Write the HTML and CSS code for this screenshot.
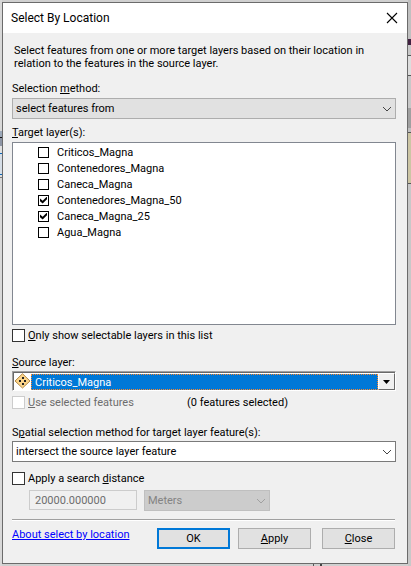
FILE: index.html
```
<!DOCTYPE html>
<html lang="en">
<head>
<meta charset="utf-8">
<title>Select By Location</title>
<link rel="stylesheet" href="styles.css">
</head>
<body>
<div class="edge edge-left"></div>
<main class="dialog">
  <header class="titlebar">
    <h1>Select By Location</h1>
    <button class="close" type="button" aria-label="Close window">
      <svg width="12" height="12" viewBox="0 0 12 12"><path d="M1 1l10 10M11 1L1 11" fill="none" stroke="#000" stroke-width="1.1"/></svg>
    </button>
  </header>
  <form class="content">
    <p class="intro">Select features from one or more target layers based on their location in relation to the features in the source layer.</p>

    <label class="caption" for="method">Selection <u>m</u>ethod:</label>
    <div class="combo combo-grey">
      <select id="method"><option>select features from</option></select>
      <svg class="chevron" width="10" height="6" viewBox="0 0 10 6"><path d="M1 1l4 4 4-4"/></svg>
    </div>

    <p class="caption" id="targets"><u>T</u>arget layer(s):</p>
    <ul class="layers" aria-labelledby="targets">
      <li><label><input type="checkbox">Criticos_Magna</label></li>
      <li><label><input type="checkbox">Contenedores_Magna</label></li>
      <li><label><input type="checkbox">Caneca_Magna</label></li>
      <li><label><input type="checkbox" checked>Contenedores_Magna_50</label></li>
      <li><label><input type="checkbox" checked>Caneca_Magna_25</label></li>
      <li><label><input type="checkbox">Agua_Magna</label></li>
    </ul>

    <label class="check"><input type="checkbox"><span><u>O</u>nly show selectable layers in this list</span></label>

    <label class="caption caption-source" for="source"><u>S</u>ource layer:</label>
    <div class="source">
      <svg class="layer-icon" width="17" height="16" viewBox="0 0 17 16"><path d="M8.500 .7l7.500 7.300-7.500 7-7.500-7z" fill="#fbd48a" stroke="#b58b45"/><path d="M8 4h2v2H8zM5 7h2v2H5zM10 7h2v2h-2zM8 10h2v2H8z" fill="#222"/></svg>
      <select id="source"><option>Criticos_Magna</option></select>
      <span class="drop"><svg width="7" height="4" viewBox="0 0 7 4"><path d="M0 0h7L3.500 4z"/></svg></span>
    </div>

    <div class="use-row">
      <label class="check disabled"><input type="checkbox" disabled><span><u>U</u>se selected features</span></label>
      <span class="count">(0 features selected)</span>
    </div>

    <label class="caption caption-spatial" for="spatial">S<u>p</u>atial selection method for target layer feature(s):</label>
    <div class="combo combo-white">
      <select id="spatial"><option>intersect the source layer feature</option></select>
      <svg class="chevron" width="10" height="6" viewBox="0 0 10 6"><path d="M1 1l4 4 4-4"/></svg>
    </div>

    <label class="check check-distance"><input type="checkbox"><span>Apply a search <u>d</u>istance</span></label>
    <div class="distance">
      <input class="amount" type="text" value="20000.000000" aria-label="Distance" disabled>
      <div class="combo combo-off">
        <select aria-label="Units" disabled><option>Meters</option></select>
        <svg class="chevron" width="10" height="6" viewBox="0 0 10 6"><path d="M1 1l4 4 4-4"/></svg>
      </div>
    </div>

    <footer class="actions">
      <a href="#about">About select by location</a>
      <button class="primary" type="button">OK</button>
      <button type="button"><u>A</u>pply</button>
      <button class="last" type="button"><u>C</u>lose</button>
    </footer>
  </form>
</main>
<div class="edge edge-right"></div>
</body>
</html>
```
FILE: styles.css
```
* { box-sizing: border-box; }
body {
  margin: 0;
  min-height: 100vh;
  display: flex;
  background:
    linear-gradient(#555, #555) 313px 100% / 1px 2px no-repeat,
    linear-gradient(#444, #444) 320px 100% / 2px 2px no-repeat,
    #d0d0d0;
  font: 11px/13px Roboto, "DejaVu Sans", sans-serif;
  color: #000;
}
h1, p, ul { margin: 0; padding: 0; font-weight: normal; }
ul { list-style: none; }
u { text-underline-offset: 1px; }
button, input, select { font: inherit; color: inherit; margin: 0; }
.edge { flex: none; }
.edge-left {
  width: 2px;
  background: linear-gradient(
    #d8d8d8 131px, #9aa7b8 131px 137px, #111 137px 138px, #8d95a5 138px 146px,
    #e0e0e0 146px 153px, #0a64b4 153px 154px, #d5dde6 154px 174px,
    #0a64b4 174px 175px, #ddd 175px 177px, #777 177px 178px, #d8d8d8 178px);
}
.edge-right {
  width: 3px;
  background: linear-gradient(
    #c0c0c0 39px, #402040 39px 45px, #c8c8c8 45px 55px, #555 55px 56px,
    #ddd 56px 75px, #555 75px 76px, #c8c8c8 76px 108px, #a0a0a0 108px 128px,
    #c0c0c0 128px 132px, #555 132px 133px, #ccc5a4 133px 183px,
    #555 183px 184px, #c8c8c8 184px);
}
.dialog {
  flex: 1;
  min-width: 0;
  margin: 2px 0;
  border: 1px solid #6b6b6b;
  background: #f0f0f0;
}
.titlebar {
  display: flex;
  align-items: center;
  justify-content: space-between;
  height: 30px;
  padding: 0 9px 0 8px;
  background: #fff;
}
h1 { font-size: 12px; line-height: 16px; }
.close { display: flex; padding: 0; border: 0; background: none; }
.content { padding: 11px 11px 14px 9px; }
.intro { padding-left: 2px; margin-bottom: 12px; }
.caption { display: block; margin-bottom: 3px; }
.combo { position: relative; height: 21px; margin-bottom: 7px; }
.combo select, .source select {
  display: block;
  width: 100%;
  height: 100%;
  padding: 0 20px 0 3px;
  border: 1px solid #adadad;
  border-radius: 0;
  background: #e1e1e1;
  appearance: none;
}
.chevron {
  position: absolute;
  right: 4px;
  top: 8px;
  fill: none;
  stroke: #444;
  pointer-events: none;
}
.combo-white select { border-color: #7a7a7a; background: #fff; }
.combo-off { width: 126px; margin: 0; }
.combo-off select { border-color: #bfbfbf; background: #ccc; color: #838383; opacity: 1; }
.combo-off .chevron { stroke: #a0a0a0; }
input[type="checkbox"] {
  flex: none;
  display: grid;
  place-items: center;
  width: 13px;
  height: 13px;
  border: 1px solid #333;
  background: #fff;
  appearance: none;
}
input[type="checkbox"]:disabled { border-color: #ccc; }
.layers {
  height: 183px;
  padding: 1px 0 0 25px;
  margin-bottom: 4px;
  border: 1px solid #828790;
  background: #fff;
}
.layers label { display: flex; align-items: center; gap: 8px; height: 16px; }
.layers input[type="checkbox"] { width: 11px; height: 11px; border-color: #000; }
.layers input:checked::after {
  content: "";
  width: 7px;
  height: 7px;
  background: #000;
  clip-path: polygon(0 30%, 38% 62%, 100% 0, 100% 38%, 38% 100%, 0 68%);
}
.check { display: flex; align-items: center; gap: 3px; }
.disabled { color: #6d6d6d; }
.caption-source { margin: 14px 0 2px; }
.source {
  display: flex;
  height: 20px;
  border: 1px solid;
  border-color: #a0a0a0 #fff #fff #a0a0a0;
  background: #fff;
  box-shadow: inset 1px 1px #696969;
}
.layer-icon { flex: none; margin: 1px 0 0 1px; }
.source select {
  flex: 1;
  min-width: 0;
  height: 16px;
  margin-top: 2px;
  padding: 0 3px;
  border: 1px dotted #ff8728;
  background: #0078d7;
  color: #fff;
}
.drop {
  display: grid;
  place-items: center;
  width: 17px;
  margin-top: 1px;
  border: 1px solid;
  border-color: #fff #696969 #696969 #fff;
  background: #f0f0f0;
}
.use-row { display: flex; justify-content: space-between; margin-top: 5px; padding-right: 108px; }
.caption-spatial { margin: 17px 0 2px; }
.check-distance { margin-top: 10px; }
.distance { display: flex; gap: 7px; margin: 5px 0 8px 17px; }
.amount {
  width: 108px;
  height: 20px;
  padding: 0 5px;
  border: 1px solid #ccc;
  background: #f0f0f0;
}
.amount:disabled { color: #6d6d6d; }
.actions {
  display: flex;
  align-items: flex-start;
  margin-right: 1px;
  padding-top: 8px;
  border-top: 1px solid #a0a0a0;
  box-shadow: inset 0 1px #fff;
}
.actions a { margin-right: auto; color: #00f; }
.actions button {
  width: 73px;
  height: 21px;
  margin-left: 8px;
  padding: 0;
  border: 1px solid #adadad;
  background: #e1e1e1;
}
.actions .primary { border: 2px solid #0078d7; }
.actions .last { margin-left: 11px; }
```
